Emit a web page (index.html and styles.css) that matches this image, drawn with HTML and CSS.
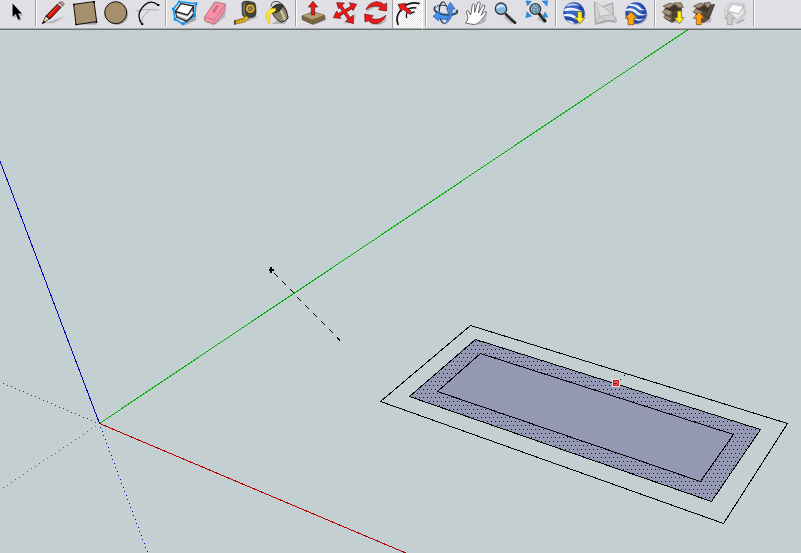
FILE: index.html
```html
<!DOCTYPE html>
<html lang="en">
<head>
<meta charset="utf-8">
<title>Model</title>
<link rel="stylesheet" href="styles.css">
</head>
<body>
<header class="toolbar" role="toolbar">
  <div class="group">
    <button class="tool" aria-label="Select"><svg viewBox="6 0 93 84"><path class="soft" d="M43 18v39l8-7 6 14 8-4-6-12h10z"/><path d="M37 9v43l10-9 7 17 8-4-7-15h12z" fill="#000" stroke="#fff" stroke-width="1"/></svg></button>
  </div>
  <div class="group">
    <button class="tool" aria-label="Line"><svg viewBox="117 0 93 84"><path d="M128 70l24-6 42-15-32 21z" class="soft"/><path d="M127 71l10-23 11 9z" fill="#f2d9a4" stroke="#111" stroke-width="2"/><path d="M126 72l5-10 6 5z"/><path d="M138 48l34-35 11 9-33 35z" fill="#d8140c" stroke="#111" stroke-width="3"/><path d="M145 48l29-31" stroke="#ff4638" stroke-width="3"/><path d="M172 13l5-5 11 9-5 5z" fill="#ddd" stroke="#333" stroke-width="2"/><path d="M178 8q6-6 12 0 6 5-1 9z" fill="#f5a0ae" stroke="#333" stroke-width="2"/></svg></button>
    <button class="tool" aria-label="Rectangle"><svg viewBox="210 0 93 84"><path class="shade" d="M226 73l64-18v19z"/><path d="M221 13l61-8 8 60-62 9z" fill="#a58f6c" stroke="#111" stroke-width="3"/><path d="M219 11h6v5h-6zM279 3h6v5h-6zM287 63h5v5h-5zM226 71h5v5h-5z"/></svg></button>
    <button class="tool" aria-label="Circle"><svg viewBox="303 0 93 84"><ellipse class="shade" cx="352" cy="44" rx="32" ry="31"/><circle cx="347" cy="38" r="33" fill="#a58f6c" stroke="#111" stroke-width="3"/></svg></button>
    <button class="tool" aria-label="Arc"><svg viewBox="396 0 93 84"><path d="M407 34q20-8 70-4M427 75q-10-24 26-47" fill="none" stroke="#b0afb3" stroke-width="3"/><path d="M475 16q-23-20-44 2-26 27-4 56" fill="none" stroke="#111" stroke-width="4"/><path d="M472 12h6v6h-6zM424 70h6v5h-6z"/></svg></button>
  </div>
  <div class="group">
    <button class="tool" aria-label="Make component"><svg viewBox="507 0 93 84"><path d="M545 68l12 7 32-15-5-14z" class="shade"/><path d="M520 27L538 5l50 6-4 36-35 25-24-14z" fill="none" stroke="#209cf2" stroke-width="5"/><path d="M527 36l4 16 29 12 19-18 1-26z" fill="#b9b9bd" stroke="#222" stroke-width="4"/><path d="M543 11l38 7-18 27-37-11z" fill="#fff" stroke="#222" stroke-width="4"/><path d="M530 43l33 11 15-18" stroke="#fff" stroke-width="5" fill="none"/><path fill="#168ee8" d="M516 23h8v8h-8zM534 2h7v7h-7zM584 7h8v8h-8zM521 54h8v8h-8zM545 68h8v8h-8zM580 43h8v8h-8z"/></svg></button>
    <button class="tool" aria-label="Eraser"><svg viewBox="120 0 93 84"><path d="M147 74h14l36-46-2 22-24 20z" class="soft"/><path d="M134 50l28-41q2-4 7-3l27 6-1 19-26 37q-3 5-8 4l-24-7q-6-3-3-15z" fill="#f58fa5" stroke="#8f6069" stroke-width="2"/><path d="M134 51l30 8 32-46M163 59l-2 13" fill="none" stroke="#b96878" stroke-width="2"/><path d="M161 36l12-20" fill="none" stroke="#9c5868" stroke-width="6" stroke-dasharray="4 2"/></svg></button>
    <button class="tool" aria-label="Tape measure"><svg viewBox="213 0 93 84"><path class="soft" d="M242 72l49-19-5-14z"/><path d="M246 9q5-8 20-5l17 4q5 4 5 31 0 9-8 12l-17 3q-11-1-16-9z" fill="#44433b" stroke="#222" stroke-width="2"/><path d="M250 8q-3 20 1 36l6 5q-5-19-1-42z" fill="#77756a"/><circle cx="271" cy="26" r="14" fill="#efb51b" stroke="#222" stroke-width="2"/><circle cx="271" cy="26" r="7" fill="#858179" stroke="#5b5138" stroke-width="2"/><path d="M259 47l-9 8-26 7 2 10 27-6 13-12z" fill="#f5bd18" stroke="#65501b" stroke-width="2"/><path d="M230 62l2 5M237 60l2 5M244 58l2 5M251 55l2 5" stroke="#332a10" stroke-width="2"/><path d="M222 61h5v13h-5z" fill="#444"/></svg></button>
    <button class="tool" aria-label="Paint bucket"><svg viewBox="786 0 93 84"><path class="soft" d="M815 72l20-14 34-10-14 24z"/><path d="M813 27l32-13q17 16 19 40-6 10-20 13-23-10-31-40z" fill="#8b8068" stroke="#28251f" stroke-width="3"/><path d="M837 25q13 14 17 35" fill="none" stroke="#c5bea5" stroke-width="8"/><path d="M813 27q16-20 34-13 3 7-7 17-11 9-23 8z" fill="#3f3929" stroke="#28251f" stroke-width="3"/><path d="M813 20q1-18 20-15 17 3 28 31" fill="none" stroke="#444" stroke-width="3"/><path d="M826 25q-18-2-24 10-7 9-4 20l3-3 2 15q5 9 8-1l-2-20q4-8 13-9 8-5 4-12z" fill="#ffe531" stroke="#b99312" stroke-width="1"/></svg></button>
  </div>
  <div class="group">
    <button class="tool" aria-label="Push/Pull"><svg viewBox="12 0 93 84"><path class="soft" d="M56 76l38-16-4-12z"/><path d="M21 48l33-13 35 11v12L53 73 22 59z" fill="#7d6543" stroke="#493d2b" stroke-width="2"/><path d="M21 48l32 12 36-14-35-11z" fill="#b39b72"/><path d="M21 48l32 12 36-14M53 60v13" fill="none" stroke="#65543a" stroke-width="2"/><path class="red" d="M49 45V21h-9L54 4l14 17h-9v24z"/></svg></button>
    <button class="tool" aria-label="Move"><svg viewBox="105 0 93 84"><path class="soft" d="M143 70l38-30v16l-16 14z"/><path d="M136 17l29 43M175 19l-49 29" stroke="#5d1512" stroke-width="10"/><path class="red" d="M125 8l23 1-17 18zM185 13l-22-5 11 24zM176 71l-24-7 22-18zM115 53l10-20 13 22z"/><path d="M136 17l29 43M175 19l-49 29" stroke="#f01818" stroke-width="7"/></svg></button>
    <button class="tool" aria-label="Rotate"><svg viewBox="198 0 93 84"><path d="M216 34q24-25 51-7M274 56q-14 23-44 14" fill="none" stroke="#aaa" stroke-width="4"/><path class="red" d="M213 29q8-21 31-24 15 0 23 9l8-5v24l-25-4 8-7q-22-11-45 7z"/><path class="red" d="M273 46q-8 22-30 25-16 0-23-9l-10 4-1-24 26 5-8 7q22 11 46-8z"/></svg></button>
    <button class="tool pressed" aria-label="Offset"><svg viewBox="291 0 93 84"><path d="M374 11q-34-9-55 17-20 24-9 47" fill="none" stroke="#111" stroke-width="5"/><path d="M364 24q-18-3-27 5M335 54q-3-13 4-19M359 36q-9 0-14 7" fill="none" stroke="#111" stroke-width="4"/><path class="red" d="M309 13l24-3-3 9 19 15-7 8-19-15-4 8z"/></svg></button>
  </div>
  <div class="group">
    <button class="tool" aria-label="Orbit"><svg viewBox="143 0 93 84"><path d="M187 5q-15 4-13 32 2 32 16 34" fill="none" stroke="#26394e" stroke-width="4"/><path d="M164 20q-10 8 3 17 21 12 50 5 15-4 8-12" fill="none" stroke="#26394e" stroke-width="7"/><path d="M165 20q-8 7 3 14 21 11 49 6 11-3 6-9" fill="none" stroke="#81b9ef" stroke-width="3"/><path d="M188 5q13 16 13 35M167 18q17-5 30 0" fill="none" stroke="#26394e" stroke-width="3"/><path d="M155 49l19-16v9q12 6 26 4v13q-14 1-27-4l-1 8z" fill="#438fea" stroke="#20599a" stroke-width="2"/><path d="M190 72q15-16 14-45h-9l12-20 14 20h-8q2 33-23 45z" fill="#438fea" stroke="#20599a" stroke-width="2"/></svg></button>
    <button class="tool" aria-label="Pan"><svg viewBox="105 0 93 84"><path class="soft" d="M135 72l31-4 20-27-5 24-14 8z"/><path d="M121 69q8-7 8-16l-5-18q1-6 6-2l7 12 5-31q3-5 7 0v23l9-29q6-4 8 1l-6 30 14-24q6-2 6 4l-12 27 11-11q7-1 5 5l-17 23-12 9q-11 3-18 0z" fill="#fff" stroke="#222" stroke-width="2"/></svg></button>
    <button class="tool" aria-label="Zoom"><svg viewBox="198 0 93 84"><path d="M239 50l23 19" stroke="#b8b7bb" stroke-width="8"/><path d="M243 43l27 25" stroke="#1c1c1c" stroke-width="8" stroke-linecap="round"/><path d="M245 42l23 21" stroke="#8a8680" stroke-width="2"/><circle cx="228" cy="26" r="17" fill="#83b8dc" stroke="#333a3e" stroke-width="4"/><path d="M214 27q-1-14 15-13 9 1 11 8-10-4-26 5z" fill="#cae6f8"/></svg></button>
    <button class="tool" aria-label="Zoom extents"><svg viewBox="291 0 93 84"><path d="M338 54l20 13" stroke="#b8b7bb" stroke-width="7"/><path d="M343 42l17 21" stroke="#1c1c1c" stroke-width="9" stroke-linecap="round"/><path d="M346 44l12 14" stroke="#8a8680" stroke-width="2"/><circle cx="331" cy="27" r="16" fill="#8bbddd" stroke="#333a3e" stroke-width="4"/><path d="M323 23l8-5 10 3v11l-8 5-10-4zM323 23l10 4 8-6M333 27v10" fill="none" stroke="#4f6573" stroke-width="2"/><path d="M303 2l17 2-13 14zM351 3l17-1-2 17zM302 53l4-18 14 14zM360 36l9 15-17 1z" fill="#278ee7" stroke="#1768ad" stroke-width="1"/></svg></button>
  </div>
  <div class="group">
    <button class="tool" aria-label="Get current view"><svg viewBox="27 0 93 84"><ellipse class="soft" cx="76" cy="45" rx="31" ry="29"/><circle cx="72" cy="39" r="32" fill="#2348a8"/><circle cx="66" cy="31" r="21" fill="#3a66c4"/><path d="M43 27q24-11 57 9-25-8-57-2zM41 43q25-7 45 14l-7 3q-15-14-38-11zM49 61q14-2 26 9l-9 1q-8-5-17-10z" fill="#eef4ff"/><path d="M53 14q20-9 37 3-17-3-41 3z" fill="#c5d6fa"/><path d="M83 35h13v18h8L90 71 75 53h8z" fill="#fff01c" stroke="#655d14" stroke-width="2"/></svg></button>
    <button class="tool" aria-label="Toggle terrain"><svg viewBox="120 0 93 84"><path class="soft" d="M138 74l39-9 23 4-17-20z"/><path d="M133 6l25 14 30-11 2 34 10 20-33-1-31 11z" fill="#d0d0d1" stroke="#858585" stroke-width="2"/><path d="M133 6l25 14 29 23-38 7z" fill="#dededf"/><path d="M133 6q16 25 16 43l-13 24M149 49l41-6M149 49l18 13M158 20l30 23" fill="none" stroke="#a6a6a6" stroke-width="2"/></svg></button>
    <button class="tool" aria-label="Place model"><svg viewBox="213 0 93 84"><ellipse class="soft" cx="262" cy="45" rx="31" ry="29"/><circle cx="258" cy="39" r="32" fill="#2348a8"/><circle cx="255" cy="31" r="22" fill="#3a66c4"/><path d="M228 27q21-7 36 10 10 9 26 4-15 11-31 1-14-14-33-9zM240 12q22-1 31 11 6 7 16 6-14 5-22-2-10-11-30-10zM253 52q13 10 30 2-13 14-30 4z" fill="#eef4ff"/><path d="M234 74V54h-9l18-19 18 19h-9v20z" fill="#ffa313" stroke="#70490d" stroke-width="2"/></svg></button>
  </div>
  <div class="group">
    <button class="tool" aria-label="Get models"><svg viewBox="24 0 93 84"><path class="soft" d="M60 69l37-18-3 18z"/><path d="M44 27l22 9 28-11-2 25-26 17-20-11z" fill="#67594a" stroke="#28221c" stroke-width="2"/><path d="M66 36l28-11-2 25-26 17z" fill="#4c4137"/><path d="M44 26l13-13 33 3 4 10-28 10z" fill="#40362b"/><path d="M39 19l21-10 13 5-17 11zM71 9l22-1 7 14-14 2zM37 37l9-11 21 9-9 13zM41 51l5-5 18 8-4 9z" fill="#a49379" stroke="#4b4033" stroke-width="2"/><path d="M82 33h12v20h8L88 71 73 53h9z" fill="#fff01c" stroke="#655d14" stroke-width="2"/></svg></button>
    <button class="tool" aria-label="Share model"><svg viewBox="117 0 93 84"><path class="soft" d="M161 70l25-17-4 14z"/><path d="M137 27l21 9 26-11-7 32-17 11-21-11z" fill="#5f5142" stroke="#28221c" stroke-width="2"/><path d="M137 26l11-14 33 3 3 11-26 10z" fill="#40362b"/><path d="M130 19l21-10 13 5-17 11zM161 9l19-2 5 12-13 5zM129 36l9-10 20 9-8 10z" fill="#a49379" stroke="#4b4033" stroke-width="2"/><path d="M164 48l17-32 13-3-17 43z" fill="#5b4e3f" stroke="#28221c" stroke-width="2"/><path d="M139 74V55h-9l17-19 16 19h-9v19z" fill="#ffa313" stroke="#70490d" stroke-width="2"/></svg></button>
    <button class="tool" aria-label="Share component"><svg viewBox="210 0 93 84"><path class="soft" d="M254 68l32-15-5 10-18 9z"/><path d="M222 27L240 7l44 5 5 30-30 25-31-9z" fill="#d7d7da" stroke="#bebec1" stroke-width="2"/><path d="M233 33l4 19 26 7 20-19-3-23z" fill="#e8e8ea" stroke="#a7a7aa" stroke-width="2"/><path d="M247 13l34 5-16 24-32-9z" fill="#fafafa" stroke="#a0a0a3" stroke-width="2"/><path d="M232 74V55h-8l15-18 16 18h-8v19z" fill="#ccc" stroke="#9b9b9b" stroke-width="2"/></svg></button>
  </div>
</header>
<main class="viewport">
  <svg class="scene" viewBox="0 30 801 523" preserveAspectRatio="xMinYMin slice" role="img" aria-label="Perspective drawing with offset rectangle">
    <defs><pattern id="dots" x="1" y="1" width="4" height="8" patternUnits="userSpaceOnUse"><path d="M0 0h1v1H0zM2 4h1v1H2z" fill="#0000b4"/></pattern></defs>
    <path d="M475 339L760 429 711 502 410 396z" fill="#9599b3"/>
    <path fill-rule="evenodd" d="M475 339L760 429 711 502 410 396zM480 353L733 434 700 481 438 391z" fill="url(#dots)"/>
    <g class="edges">
      <path d="M470.500 325.500L787.500 423.500 723.500 523.500 380.500 401.500z"/>
      <path d="M475.500 339.500L760.500 429.500 711.500 501.500 409.500 396.500z"/>
      <path d="M480.500 353.500L733.500 434.500 700.500 481.500 437.500 391.500z"/>
      <path d="M274 273l4 4M282 281l4 4M290 289l4 4M297 297l4 4M305 305l4 4M313 313l4 4M321 321l4 4M329 329l4 4M337 337l3 4"/>
      <path d="M616.500 383.500L626.500 373.500" stroke-dasharray="2 3"/>
    </g>
    <g class="axes">
      <path d="M99.500 423.500L687.500 30" stroke="#00b000"/>
      <path d="M0 161L99.500 423.500" stroke="#0000b4"/>
      <path d="M99.500 423.500L407 553.500" stroke="#b40000"/>
    </g>
    <g class="hidden-axes" transform="translate(0 .5)">
      <path stroke="#b40000" d="M3 383h1M7 385h1M11 386h1M15 388h1M19 390h1M23 391h1M27 393h1M31 395h1M35 396h1M39 398h1M43 400h1M47 401h1M51 403h1M55 405h1M59 407h1M63 408h1M67 410h1M71 412h1M75 413h1M79 415h1M83 417h1M87 418h1M91 420h1M95 422h1"/>
      <path stroke="#00a000" d="M3 487h1M7 485h1M11 482h1M15 479h1M19 477h1M23 474h1M27 471h1M31 468h1M35 466h1M39 463h1M43 460h1M47 458h1M51 455h1M55 453h1M59 450h1M63 447h1M67 445h1M71 442h1M75 439h1M79 437h1M83 434h1M87 431h1M91 428h1M95 426h1"/>
      <path stroke="#0000b4" d="M100 427h1M102 431h1M103 435h1M105 439h1M106 443h1M108 447h1M109 451h1M111 455h1M112 459h1M114 463h1M115 467h1M117 471h1M118 475h1M120 479h1M121 483h1M123 487h1M124 491h1M126 495h1M127 499h1M129 503h1M130 507h1M132 511h1M133 515h1M135 519h1M136 523h1M138 527h1M139 531h1M141 535h1M142 539h1M144 543h1M145 547h1M147 551h1"/>
    </g>
    <path d="M270 267h2v2h2v2h-2v2h-2v-2h-1v-2h1z" fill="#000"/>
    <path d="M612 379h8v8h-8z" fill="#f4dede"/><path d="M613 380h6v6h-6z" fill="#b71c22"/><path d="M614 381h4v4h-4z" fill="#f25555"/><path d="M614 383h3v1h-3z" fill="#7e1820"/>
  </svg>
</main>
</body>
</html>
```
FILE: styles.css
```css
* { box-sizing: border-box; }

body {
  margin: 0;
  height: 100vh;
  display: flex;
  flex-direction: column;
  overflow: hidden;
  background: #c4cfd1;
  font-family: "Liberation Sans", sans-serif;
}

.toolbar {
  display: flex;
  flex: none;
  padding-left: 2px;
  background: #e0dfe4;
  border-bottom: 1px solid #716f6c;
  box-shadow: inset 0 -1px #aaa9a9;
}

.group {
  display: flex;
  padding-right: 6px;
  background: linear-gradient(#a09fa3, #a09fa3) right 3px top 0 / 1px 26px no-repeat,
              linear-gradient(#fff, #fff) right 2px top 0 / 1px 26px no-repeat;
}

.tool {
  width: 31px;
  height: 29px;
  padding: 0 0 1px;
  border: 0;
  background: none;
}

.tool svg {
  display: block;
  width: 31px;
  height: 28px;
}

.tool.pressed {
  background: repeating-conic-gradient(#fff 0 25%, #e6e5ea 0 50%) 0 0 / 2px 2px;
  background-clip: content-box;
  box-shadow: inset 1px 0 #a09fa3, inset -1px 0 #fff;
}

.shade { fill: #a4a3a8; }

.soft { fill: #b5b4b9; }

.red {
  fill: #f01818;
  stroke: #5d1512;
  stroke-width: 2;
}

.viewport {
  flex: 1;
  min-height: 0;
}

.scene {
  display: block;
  width: 100%;
  height: 100%;
  shape-rendering: crispEdges;
}

.edges path {
  fill: none;
  stroke: #000;
}

.axes path,
.hidden-axes path { fill: none; }
```
